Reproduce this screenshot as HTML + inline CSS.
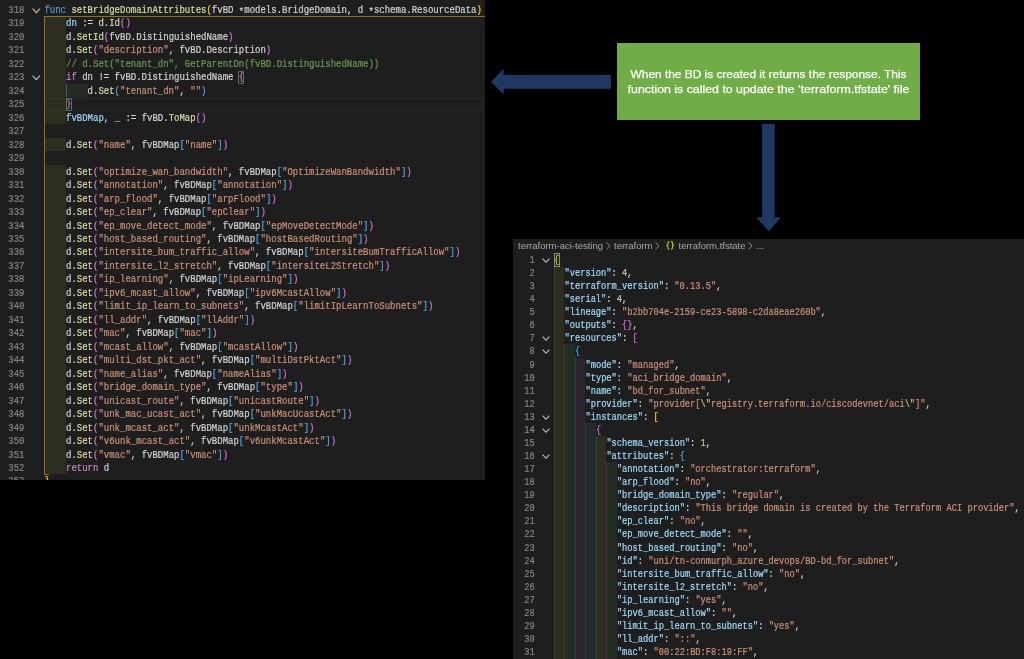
<!DOCTYPE html><html><head><meta charset="utf-8"><style>
*{margin:0;padding:0;box-sizing:border-box}
html,body{width:1024px;height:659px;overflow:hidden;background:#000}
body{position:relative;font-family:"Liberation Mono",monospace}
#lp{will-change:transform;position:absolute;left:0;top:0;width:485px;height:480px;background:#1e1e1e;overflow:hidden}
#rp{will-change:transform;position:absolute;left:513px;top:239px;width:511px;height:420px;background:#1e1e1e;overflow:hidden}
.ln{position:absolute;left:0;text-align:right;color:#858585;white-space:pre}
.cl{position:absolute;white-space:pre}
.ir{position:absolute}
.l{font-size:9px;line-height:13.47px;height:13.47px;transform-origin:0 8.2px;transform:translateY(1.8px) scaleY(1.15)}
.r{font-size:8.73px;line-height:13.07px;height:13.07px;transform-origin:0 8px;transform:translateY(1.6px) scaleY(1.15)}
.t{color:#d4d4d4}.k{color:#569cd6}.c{color:#c586c0}.f{color:#dcdcaa}.v{color:#9cdcfe}
.s{color:#ce9178}.m{color:#6a9955}.n{color:#b5cea8}.e{color:#d7ba7d}
.ast{color:#d4d4d4;position:relative;top:1.6px}.b1{color:#ffd700}.b2{color:#da70d6}.b3{color:#45acea}
.cl,.ln{-webkit-text-stroke:0.18px currentColor}
.bc{position:absolute;left:0;top:0;width:511px;height:14px;font-family:"Liberation Sans",sans-serif;font-size:9.5px;color:#a9a9a9}
.bt,.bti{position:absolute;top:1px;line-height:12px;white-space:pre}
.bti{color:#cbcb41}
#box{position:absolute;left:617px;top:43px;width:303px;height:77px;background:#70ad47;color:#fff;font-family:"Liberation Sans",sans-serif;font-size:11.5px;text-align:center}
#box{will-change:transform}
.bl{position:absolute;left:0;width:303px;white-space:pre;text-align:center;line-height:14px;-webkit-text-stroke:0.25px #fff}
</style></head><body><div id="lp"><div class="ln l" style="top:3.00px;width:24.50px">318</div><div class="cl l" style="left:44.40px;top:3.00px"><span class="k">func</span><span class="t"> </span><span class="f">setBridgeDomainAttributes</span><span class="b1">(</span><span class="t">fvBD </span><span class="ast">*</span><span class="t">models.BridgeDomain, d </span><span class="ast">*</span><span class="t">schema.ResourceData</span><span class="b1">)</span><span class="t"> </span><span class="b1">{</span></div><div class="ln l" style="top:16.47px;width:24.50px">319</div><div class="ir" style="left:44.40px;top:16.47px;width:21.60px;height:13.49px;background:rgba(255,255,64,0.07)"></div><div class="cl l" style="left:66.00px;top:16.47px"><span class="v">dn</span><span class="t"> := d.</span><span class="f">Id</span><span class="b2">()</span></div><div class="ln l" style="top:29.94px;width:24.50px">320</div><div class="ir" style="left:44.40px;top:29.94px;width:21.60px;height:13.49px;background:rgba(255,255,64,0.07)"></div><div class="cl l" style="left:66.00px;top:29.94px"><span class="t">d.</span><span class="f">SetId</span><span class="b2">(</span><span class="t">fvBD.DistinguishedName</span><span class="b2">)</span></div><div class="ln l" style="top:43.41px;width:24.50px">321</div><div class="ir" style="left:44.40px;top:43.41px;width:21.60px;height:13.49px;background:rgba(255,255,64,0.07)"></div><div class="cl l" style="left:66.00px;top:43.41px"><span class="t">d.</span><span class="f">Set</span><span class="b2">(</span><span class="s">&quot;description&quot;</span><span class="t">, fvBD.Description</span><span class="b2">)</span></div><div class="ln l" style="top:56.88px;width:24.50px">322</div><div class="ir" style="left:44.40px;top:56.88px;width:21.60px;height:13.49px;background:rgba(255,255,64,0.07)"></div><div class="cl l" style="left:66.00px;top:56.88px"><span class="m">// d.Set(&quot;tenant_dn&quot;, GetParentDn(fvBD.DistinguishedName))</span></div><div class="ln l" style="top:70.35px;width:24.50px">323</div><div class="ir" style="left:44.40px;top:70.35px;width:21.60px;height:13.49px;background:rgba(255,255,64,0.07)"></div><div class="cl l" style="left:66.00px;top:70.35px"><span class="c">if</span><span class="t"> dn != fvBD.DistinguishedName </span><span class="b2">{</span></div><div class="ln l" style="top:83.82px;width:24.50px">324</div><div class="ir" style="left:44.40px;top:83.82px;width:21.60px;height:13.49px;background:rgba(255,255,64,0.07)"></div><div class="ir" style="left:66.00px;top:83.82px;width:21.60px;height:13.49px;background:rgba(127,255,127,0.07)"></div><div class="cl l" style="left:87.60px;top:83.82px"><span class="t">d.</span><span class="f">Set</span><span class="b3">(</span><span class="s">&quot;tenant_dn&quot;</span><span class="t">, </span><span class="s">&quot;&quot;</span><span class="b3">)</span></div><div class="ln l" style="top:97.29px;width:24.50px">325</div><div class="ir" style="left:44.40px;top:97.29px;width:21.60px;height:13.49px;background:rgba(255,255,64,0.07)"></div><div class="cl l" style="left:66.00px;top:97.29px"><span class="b2">}</span></div><div class="ln l" style="top:110.76px;width:24.50px">326</div><div class="ir" style="left:44.40px;top:110.76px;width:21.60px;height:13.49px;background:rgba(255,255,64,0.07)"></div><div class="cl l" style="left:66.00px;top:110.76px"><span class="v">fvBDMap</span><span class="t">, </span><span class="v">_</span><span class="t"> := fvBD.</span><span class="f">ToMap</span><span class="b2">()</span></div><div class="ln l" style="top:124.23px;width:24.50px">327</div><div class="ln l" style="top:137.70px;width:24.50px">328</div><div class="ir" style="left:44.40px;top:137.70px;width:21.60px;height:13.49px;background:rgba(255,255,64,0.07)"></div><div class="cl l" style="left:66.00px;top:137.70px"><span class="t">d.</span><span class="f">Set</span><span class="b2">(</span><span class="s">&quot;name&quot;</span><span class="t">, fvBDMap</span><span class="b3">[</span><span class="s">&quot;name&quot;</span><span class="b3">]</span><span class="b2">)</span></div><div class="ln l" style="top:151.17px;width:24.50px">329</div><div class="ln l" style="top:164.64px;width:24.50px">330</div><div class="ir" style="left:44.40px;top:164.64px;width:21.60px;height:13.49px;background:rgba(255,255,64,0.07)"></div><div class="cl l" style="left:66.00px;top:164.64px"><span class="t">d.</span><span class="f">Set</span><span class="b2">(</span><span class="s">&quot;optimize_wan_bandwidth&quot;</span><span class="t">, fvBDMap</span><span class="b3">[</span><span class="s">&quot;OptimizeWanBandwidth&quot;</span><span class="b3">]</span><span class="b2">)</span></div><div class="ln l" style="top:178.11px;width:24.50px">331</div><div class="ir" style="left:44.40px;top:178.11px;width:21.60px;height:13.49px;background:rgba(255,255,64,0.07)"></div><div class="cl l" style="left:66.00px;top:178.11px"><span class="t">d.</span><span class="f">Set</span><span class="b2">(</span><span class="s">&quot;annotation&quot;</span><span class="t">, fvBDMap</span><span class="b3">[</span><span class="s">&quot;annotation&quot;</span><span class="b3">]</span><span class="b2">)</span></div><div class="ln l" style="top:191.58px;width:24.50px">332</div><div class="ir" style="left:44.40px;top:191.58px;width:21.60px;height:13.49px;background:rgba(255,255,64,0.07)"></div><div class="cl l" style="left:66.00px;top:191.58px"><span class="t">d.</span><span class="f">Set</span><span class="b2">(</span><span class="s">&quot;arp_flood&quot;</span><span class="t">, fvBDMap</span><span class="b3">[</span><span class="s">&quot;arpFlood&quot;</span><span class="b3">]</span><span class="b2">)</span></div><div class="ln l" style="top:205.05px;width:24.50px">333</div><div class="ir" style="left:44.40px;top:205.05px;width:21.60px;height:13.49px;background:rgba(255,255,64,0.07)"></div><div class="cl l" style="left:66.00px;top:205.05px"><span class="t">d.</span><span class="f">Set</span><span class="b2">(</span><span class="s">&quot;ep_clear&quot;</span><span class="t">, fvBDMap</span><span class="b3">[</span><span class="s">&quot;epClear&quot;</span><span class="b3">]</span><span class="b2">)</span></div><div class="ln l" style="top:218.52px;width:24.50px">334</div><div class="ir" style="left:44.40px;top:218.52px;width:21.60px;height:13.49px;background:rgba(255,255,64,0.07)"></div><div class="cl l" style="left:66.00px;top:218.52px"><span class="t">d.</span><span class="f">Set</span><span class="b2">(</span><span class="s">&quot;ep_move_detect_mode&quot;</span><span class="t">, fvBDMap</span><span class="b3">[</span><span class="s">&quot;epMoveDetectMode&quot;</span><span class="b3">]</span><span class="b2">)</span></div><div class="ln l" style="top:231.99px;width:24.50px">335</div><div class="ir" style="left:44.40px;top:231.99px;width:21.60px;height:13.49px;background:rgba(255,255,64,0.07)"></div><div class="cl l" style="left:66.00px;top:231.99px"><span class="t">d.</span><span class="f">Set</span><span class="b2">(</span><span class="s">&quot;host_based_routing&quot;</span><span class="t">, fvBDMap</span><span class="b3">[</span><span class="s">&quot;hostBasedRouting&quot;</span><span class="b3">]</span><span class="b2">)</span></div><div class="ln l" style="top:245.46px;width:24.50px">336</div><div class="ir" style="left:44.40px;top:245.46px;width:21.60px;height:13.49px;background:rgba(255,255,64,0.07)"></div><div class="cl l" style="left:66.00px;top:245.46px"><span class="t">d.</span><span class="f">Set</span><span class="b2">(</span><span class="s">&quot;intersite_bum_traffic_allow&quot;</span><span class="t">, fvBDMap</span><span class="b3">[</span><span class="s">&quot;intersiteBumTrafficAllow&quot;</span><span class="b3">]</span><span class="b2">)</span></div><div class="ln l" style="top:258.93px;width:24.50px">337</div><div class="ir" style="left:44.40px;top:258.93px;width:21.60px;height:13.49px;background:rgba(255,255,64,0.07)"></div><div class="cl l" style="left:66.00px;top:258.93px"><span class="t">d.</span><span class="f">Set</span><span class="b2">(</span><span class="s">&quot;intersite_l2_stretch&quot;</span><span class="t">, fvBDMap</span><span class="b3">[</span><span class="s">&quot;intersiteL2Stretch&quot;</span><span class="b3">]</span><span class="b2">)</span></div><div class="ln l" style="top:272.40px;width:24.50px">338</div><div class="ir" style="left:44.40px;top:272.40px;width:21.60px;height:13.49px;background:rgba(255,255,64,0.07)"></div><div class="cl l" style="left:66.00px;top:272.40px"><span class="t">d.</span><span class="f">Set</span><span class="b2">(</span><span class="s">&quot;ip_learning&quot;</span><span class="t">, fvBDMap</span><span class="b3">[</span><span class="s">&quot;ipLearning&quot;</span><span class="b3">]</span><span class="b2">)</span></div><div class="ln l" style="top:285.87px;width:24.50px">339</div><div class="ir" style="left:44.40px;top:285.87px;width:21.60px;height:13.49px;background:rgba(255,255,64,0.07)"></div><div class="cl l" style="left:66.00px;top:285.87px"><span class="t">d.</span><span class="f">Set</span><span class="b2">(</span><span class="s">&quot;ipv6_mcast_allow&quot;</span><span class="t">, fvBDMap</span><span class="b3">[</span><span class="s">&quot;ipv6McastAllow&quot;</span><span class="b3">]</span><span class="b2">)</span></div><div class="ln l" style="top:299.34px;width:24.50px">340</div><div class="ir" style="left:44.40px;top:299.34px;width:21.60px;height:13.49px;background:rgba(255,255,64,0.07)"></div><div class="cl l" style="left:66.00px;top:299.34px"><span class="t">d.</span><span class="f">Set</span><span class="b2">(</span><span class="s">&quot;limit_ip_learn_to_subnets&quot;</span><span class="t">, fvBDMap</span><span class="b3">[</span><span class="s">&quot;limitIpLearnToSubnets&quot;</span><span class="b3">]</span><span class="b2">)</span></div><div class="ln l" style="top:312.81px;width:24.50px">341</div><div class="ir" style="left:44.40px;top:312.81px;width:21.60px;height:13.49px;background:rgba(255,255,64,0.07)"></div><div class="cl l" style="left:66.00px;top:312.81px"><span class="t">d.</span><span class="f">Set</span><span class="b2">(</span><span class="s">&quot;ll_addr&quot;</span><span class="t">, fvBDMap</span><span class="b3">[</span><span class="s">&quot;llAddr&quot;</span><span class="b3">]</span><span class="b2">)</span></div><div class="ln l" style="top:326.28px;width:24.50px">342</div><div class="ir" style="left:44.40px;top:326.28px;width:21.60px;height:13.49px;background:rgba(255,255,64,0.07)"></div><div class="cl l" style="left:66.00px;top:326.28px"><span class="t">d.</span><span class="f">Set</span><span class="b2">(</span><span class="s">&quot;mac&quot;</span><span class="t">, fvBDMap</span><span class="b3">[</span><span class="s">&quot;mac&quot;</span><span class="b3">]</span><span class="b2">)</span></div><div class="ln l" style="top:339.75px;width:24.50px">343</div><div class="ir" style="left:44.40px;top:339.75px;width:21.60px;height:13.49px;background:rgba(255,255,64,0.07)"></div><div class="cl l" style="left:66.00px;top:339.75px"><span class="t">d.</span><span class="f">Set</span><span class="b2">(</span><span class="s">&quot;mcast_allow&quot;</span><span class="t">, fvBDMap</span><span class="b3">[</span><span class="s">&quot;mcastAllow&quot;</span><span class="b3">]</span><span class="b2">)</span></div><div class="ln l" style="top:353.22px;width:24.50px">344</div><div class="ir" style="left:44.40px;top:353.22px;width:21.60px;height:13.49px;background:rgba(255,255,64,0.07)"></div><div class="cl l" style="left:66.00px;top:353.22px"><span class="t">d.</span><span class="f">Set</span><span class="b2">(</span><span class="s">&quot;multi_dst_pkt_act&quot;</span><span class="t">, fvBDMap</span><span class="b3">[</span><span class="s">&quot;multiDstPktAct&quot;</span><span class="b3">]</span><span class="b2">)</span></div><div class="ln l" style="top:366.69px;width:24.50px">345</div><div class="ir" style="left:44.40px;top:366.69px;width:21.60px;height:13.49px;background:rgba(255,255,64,0.07)"></div><div class="cl l" style="left:66.00px;top:366.69px"><span class="t">d.</span><span class="f">Set</span><span class="b2">(</span><span class="s">&quot;name_alias&quot;</span><span class="t">, fvBDMap</span><span class="b3">[</span><span class="s">&quot;nameAlias&quot;</span><span class="b3">]</span><span class="b2">)</span></div><div class="ln l" style="top:380.16px;width:24.50px">346</div><div class="ir" style="left:44.40px;top:380.16px;width:21.60px;height:13.49px;background:rgba(255,255,64,0.07)"></div><div class="cl l" style="left:66.00px;top:380.16px"><span class="t">d.</span><span class="f">Set</span><span class="b2">(</span><span class="s">&quot;bridge_domain_type&quot;</span><span class="t">, fvBDMap</span><span class="b3">[</span><span class="s">&quot;type&quot;</span><span class="b3">]</span><span class="b2">)</span></div><div class="ln l" style="top:393.63px;width:24.50px">347</div><div class="ir" style="left:44.40px;top:393.63px;width:21.60px;height:13.49px;background:rgba(255,255,64,0.07)"></div><div class="cl l" style="left:66.00px;top:393.63px"><span class="t">d.</span><span class="f">Set</span><span class="b2">(</span><span class="s">&quot;unicast_route&quot;</span><span class="t">, fvBDMap</span><span class="b3">[</span><span class="s">&quot;unicastRoute&quot;</span><span class="b3">]</span><span class="b2">)</span></div><div class="ln l" style="top:407.10px;width:24.50px">348</div><div class="ir" style="left:44.40px;top:407.10px;width:21.60px;height:13.49px;background:rgba(255,255,64,0.07)"></div><div class="cl l" style="left:66.00px;top:407.10px"><span class="t">d.</span><span class="f">Set</span><span class="b2">(</span><span class="s">&quot;unk_mac_ucast_act&quot;</span><span class="t">, fvBDMap</span><span class="b3">[</span><span class="s">&quot;unkMacUcastAct&quot;</span><span class="b3">]</span><span class="b2">)</span></div><div class="ln l" style="top:420.57px;width:24.50px">349</div><div class="ir" style="left:44.40px;top:420.57px;width:21.60px;height:13.49px;background:rgba(255,255,64,0.07)"></div><div class="cl l" style="left:66.00px;top:420.57px"><span class="t">d.</span><span class="f">Set</span><span class="b2">(</span><span class="s">&quot;unk_mcast_act&quot;</span><span class="t">, fvBDMap</span><span class="b3">[</span><span class="s">&quot;unkMcastAct&quot;</span><span class="b3">]</span><span class="b2">)</span></div><div class="ln l" style="top:434.04px;width:24.50px">350</div><div class="ir" style="left:44.40px;top:434.04px;width:21.60px;height:13.49px;background:rgba(255,255,64,0.07)"></div><div class="cl l" style="left:66.00px;top:434.04px"><span class="t">d.</span><span class="f">Set</span><span class="b2">(</span><span class="s">&quot;v6unk_mcast_act&quot;</span><span class="t">, fvBDMap</span><span class="b3">[</span><span class="s">&quot;v6unkMcastAct&quot;</span><span class="b3">]</span><span class="b2">)</span></div><div class="ln l" style="top:447.51px;width:24.50px">351</div><div class="ir" style="left:44.40px;top:447.51px;width:21.60px;height:13.49px;background:rgba(255,255,64,0.07)"></div><div class="cl l" style="left:66.00px;top:447.51px"><span class="t">d.</span><span class="f">Set</span><span class="b2">(</span><span class="s">&quot;vmac&quot;</span><span class="t">, fvBDMap</span><span class="b3">[</span><span class="s">&quot;vmac&quot;</span><span class="b3">]</span><span class="b2">)</span></div><div class="ln l" style="top:460.98px;width:24.50px">352</div><div class="ir" style="left:44.40px;top:460.98px;width:21.60px;height:13.49px;background:rgba(255,255,64,0.07)"></div><div class="cl l" style="left:66.00px;top:460.98px"><span class="c">return</span><span class="t"> d</span></div><div class="ln l" style="top:474.45px;width:24.50px">353</div><div class="cl l" style="left:44.40px;top:474.45px"><span class="b1">}</span></div><div style="position:absolute;left:45px;top:98.09px;width:440px;height:12.87px;border-top:1.2px solid rgba(255,255,255,0.055);border-bottom:1.2px solid rgba(255,255,255,0.055)"></div><div style="position:absolute;left:65.70px;top:98.09px;width:6.30px;height:13.07px;border:1px solid #6a6a6a;border-radius:1px;background:rgba(0,100,0,0.12)"></div><div style="position:absolute;left:238.00px;top:71.15px;width:6.30px;height:13.07px;border:1px solid #6a6a6a;border-radius:1px;background:rgba(0,100,0,0.12)"></div><div style="position:absolute;left:66px;top:83.82px;width:1px;height:13.47px;background:#555"></div><div style="position:absolute;left:43.9px;top:16px;width:442px;height:1.2px;background:#8a7418"></div><div style="position:absolute;left:43.9px;top:16px;width:1.2px;height:459px;background:#8a7418"></div><div style="position:absolute;left:43.9px;top:474px;width:5.6px;height:1.2px;background:#8a7418"></div><svg style="position:absolute;left:31.5px;top:7.90px" width="9" height="6" viewBox="0 0 9 6"><polyline points="0.6,0.6 4.3,4.6 8.0,0.6" fill="none" stroke="#c5c5c5" stroke-width="1.1"/></svg><svg style="position:absolute;left:31.5px;top:75.25px" width="9" height="6" viewBox="0 0 9 6"><polyline points="0.6,0.6 4.3,4.6 8.0,0.6" fill="none" stroke="#c5c5c5" stroke-width="1.1"/></svg></div><div id="rp"><div class="bc"><span class="bt" style="left:5px">terraform-aci-testing</span><span class="bt" style="left:101px">terraform</span><span class="bt" style="left:165.5px">terraform.tfstate</span><span class="bt" style="left:243px">...</span><svg style="position:absolute;left:93.30px;top:2.9px" width="5" height="8" viewBox="0 0 5 8"><polyline points="0.5,0.4 4.0,3.8 0.5,7.2" fill="none" stroke="#9b9b9b" stroke-width="0.9"/></svg><svg style="position:absolute;left:142.30px;top:2.9px" width="5" height="8" viewBox="0 0 5 8"><polyline points="0.5,0.4 4.0,3.8 0.5,7.2" fill="none" stroke="#9b9b9b" stroke-width="0.9"/></svg><svg style="position:absolute;left:235.20px;top:2.9px" width="5" height="8" viewBox="0 0 5 8"><polyline points="0.5,0.4 4.0,3.8 0.5,7.2" fill="none" stroke="#9b9b9b" stroke-width="0.9"/></svg><svg style="position:absolute;left:152.5px;top:1.7px" width="9" height="9" viewBox="0 0 9 9"><path d="M3.4,0.6 C2.2,0.6 1.9,1.1 1.9,2.0 L1.9,3.3 C1.9,4.0 1.5,4.4 0.5,4.4 C1.5,4.4 1.9,4.8 1.9,5.5 L1.9,6.8 C1.9,7.7 2.2,8.2 3.4,8.2 M5.0,0.6 C6.2,0.6 6.5,1.1 6.5,2.0 L6.5,3.3 C6.5,4.0 6.9,4.4 7.9,4.4 C6.9,4.4 6.5,4.8 6.5,5.5 L6.5,6.8 C6.5,7.7 6.2,8.2 5.0,8.2" fill="none" stroke="#c5c52a" stroke-width="1.1"/></svg></div><div class="ln r" style="top:14.00px;width:21.70px">1</div><div class="cl r" style="left:41.00px;top:14.00px"><span class="b1">{</span></div><div class="ln r" style="top:27.07px;width:21.70px">2</div><div class="ir" style="left:41.00px;top:27.07px;width:10.48px;height:13.09px;background:rgba(255,255,64,0.07);border-left:1px solid rgba(255,255,255,0.09)"></div><div class="cl r" style="left:51.48px;top:27.07px"><span class="v">&quot;version&quot;</span><span class="t">: </span><span class="n">4</span><span class="t">,</span></div><div class="ln r" style="top:40.14px;width:21.70px">3</div><div class="ir" style="left:41.00px;top:40.14px;width:10.48px;height:13.09px;background:rgba(255,255,64,0.07);border-left:1px solid rgba(255,255,255,0.09)"></div><div class="cl r" style="left:51.48px;top:40.14px"><span class="v">&quot;terraform_version&quot;</span><span class="t">: </span><span class="s">&quot;0.13.5&quot;</span><span class="t">,</span></div><div class="ln r" style="top:53.21px;width:21.70px">4</div><div class="ir" style="left:41.00px;top:53.21px;width:10.48px;height:13.09px;background:rgba(255,255,64,0.07);border-left:1px solid rgba(255,255,255,0.09)"></div><div class="cl r" style="left:51.48px;top:53.21px"><span class="v">&quot;serial&quot;</span><span class="t">: </span><span class="n">4</span><span class="t">,</span></div><div class="ln r" style="top:66.28px;width:21.70px">5</div><div class="ir" style="left:41.00px;top:66.28px;width:10.48px;height:13.09px;background:rgba(255,255,64,0.07);border-left:1px solid rgba(255,255,255,0.09)"></div><div class="cl r" style="left:51.48px;top:66.28px"><span class="v">&quot;lineage&quot;</span><span class="t">: </span><span class="s">&quot;b2bb704e-2159-ce23-5898-c2da8eae260b&quot;</span><span class="t">,</span></div><div class="ln r" style="top:79.35px;width:21.70px">6</div><div class="ir" style="left:41.00px;top:79.35px;width:10.48px;height:13.09px;background:rgba(255,255,64,0.07);border-left:1px solid rgba(255,255,255,0.09)"></div><div class="cl r" style="left:51.48px;top:79.35px"><span class="v">&quot;outputs&quot;</span><span class="t">: </span><span class="b2">{}</span><span class="t">,</span></div><div class="ln r" style="top:92.42px;width:21.70px">7</div><div class="ir" style="left:41.00px;top:92.42px;width:10.48px;height:13.09px;background:rgba(255,255,64,0.07);border-left:1px solid rgba(255,255,255,0.09)"></div><div class="cl r" style="left:51.48px;top:92.42px"><span class="v">&quot;resources&quot;</span><span class="t">: </span><span class="b2">[</span></div><div class="ln r" style="top:105.49px;width:21.70px">8</div><div class="ir" style="left:41.00px;top:105.49px;width:10.48px;height:13.09px;background:rgba(255,255,64,0.07);border-left:1px solid rgba(255,255,255,0.09)"></div><div class="ir" style="left:51.48px;top:105.49px;width:10.48px;height:13.09px;background:rgba(127,255,127,0.07);border-left:1px solid rgba(255,255,255,0.09)"></div><div class="cl r" style="left:61.96px;top:105.49px"><span class="b3">{</span></div><div class="ln r" style="top:118.56px;width:21.70px">9</div><div class="ir" style="left:41.00px;top:118.56px;width:10.48px;height:13.09px;background:rgba(255,255,64,0.07);border-left:1px solid rgba(255,255,255,0.09)"></div><div class="ir" style="left:51.48px;top:118.56px;width:10.48px;height:13.09px;background:rgba(127,255,127,0.07);border-left:1px solid rgba(255,255,255,0.09)"></div><div class="ir" style="left:61.96px;top:118.56px;width:10.48px;height:13.09px;background:rgba(255,127,255,0.07);border-left:1px solid rgba(255,255,255,0.09)"></div><div class="cl r" style="left:72.44px;top:118.56px"><span class="v">&quot;mode&quot;</span><span class="t">: </span><span class="s">&quot;managed&quot;</span><span class="t">,</span></div><div class="ln r" style="top:131.63px;width:21.70px">10</div><div class="ir" style="left:41.00px;top:131.63px;width:10.48px;height:13.09px;background:rgba(255,255,64,0.07);border-left:1px solid rgba(255,255,255,0.09)"></div><div class="ir" style="left:51.48px;top:131.63px;width:10.48px;height:13.09px;background:rgba(127,255,127,0.07);border-left:1px solid rgba(255,255,255,0.09)"></div><div class="ir" style="left:61.96px;top:131.63px;width:10.48px;height:13.09px;background:rgba(255,127,255,0.07);border-left:1px solid rgba(255,255,255,0.09)"></div><div class="cl r" style="left:72.44px;top:131.63px"><span class="v">&quot;type&quot;</span><span class="t">: </span><span class="s">&quot;aci_bridge_domain&quot;</span><span class="t">,</span></div><div class="ln r" style="top:144.70px;width:21.70px">11</div><div class="ir" style="left:41.00px;top:144.70px;width:10.48px;height:13.09px;background:rgba(255,255,64,0.07);border-left:1px solid rgba(255,255,255,0.09)"></div><div class="ir" style="left:51.48px;top:144.70px;width:10.48px;height:13.09px;background:rgba(127,255,127,0.07);border-left:1px solid rgba(255,255,255,0.09)"></div><div class="ir" style="left:61.96px;top:144.70px;width:10.48px;height:13.09px;background:rgba(255,127,255,0.07);border-left:1px solid rgba(255,255,255,0.09)"></div><div class="cl r" style="left:72.44px;top:144.70px"><span class="v">&quot;name&quot;</span><span class="t">: </span><span class="s">&quot;bd_for_subnet&quot;</span><span class="t">,</span></div><div class="ln r" style="top:157.77px;width:21.70px">12</div><div class="ir" style="left:41.00px;top:157.77px;width:10.48px;height:13.09px;background:rgba(255,255,64,0.07);border-left:1px solid rgba(255,255,255,0.09)"></div><div class="ir" style="left:51.48px;top:157.77px;width:10.48px;height:13.09px;background:rgba(127,255,127,0.07);border-left:1px solid rgba(255,255,255,0.09)"></div><div class="ir" style="left:61.96px;top:157.77px;width:10.48px;height:13.09px;background:rgba(255,127,255,0.07);border-left:1px solid rgba(255,255,255,0.09)"></div><div class="cl r" style="left:72.44px;top:157.77px"><span class="v">&quot;provider&quot;</span><span class="t">: </span><span class="s">&quot;provider[</span><span class="e">\&quot;</span><span class="s">registry.terraform.io/ciscodevnet/aci</span><span class="e">\&quot;</span><span class="s">]&quot;</span><span class="t">,</span></div><div class="ln r" style="top:170.84px;width:21.70px">13</div><div class="ir" style="left:41.00px;top:170.84px;width:10.48px;height:13.09px;background:rgba(255,255,64,0.07);border-left:1px solid rgba(255,255,255,0.09)"></div><div class="ir" style="left:51.48px;top:170.84px;width:10.48px;height:13.09px;background:rgba(127,255,127,0.07);border-left:1px solid rgba(255,255,255,0.09)"></div><div class="ir" style="left:61.96px;top:170.84px;width:10.48px;height:13.09px;background:rgba(255,127,255,0.07);border-left:1px solid rgba(255,255,255,0.09)"></div><div class="cl r" style="left:72.44px;top:170.84px"><span class="v">&quot;instances&quot;</span><span class="t">: </span><span class="b1">[</span></div><div class="ln r" style="top:183.91px;width:21.70px">14</div><div class="ir" style="left:41.00px;top:183.91px;width:10.48px;height:13.09px;background:rgba(255,255,64,0.07);border-left:1px solid rgba(255,255,255,0.09)"></div><div class="ir" style="left:51.48px;top:183.91px;width:10.48px;height:13.09px;background:rgba(127,255,127,0.07);border-left:1px solid rgba(255,255,255,0.09)"></div><div class="ir" style="left:61.96px;top:183.91px;width:10.48px;height:13.09px;background:rgba(255,127,255,0.07);border-left:1px solid rgba(255,255,255,0.09)"></div><div class="ir" style="left:72.44px;top:183.91px;width:10.48px;height:13.09px;background:rgba(79,236,236,0.07);border-left:1px solid rgba(255,255,255,0.09)"></div><div class="cl r" style="left:82.92px;top:183.91px"><span class="b2">{</span></div><div class="ln r" style="top:196.98px;width:21.70px">15</div><div class="ir" style="left:41.00px;top:196.98px;width:10.48px;height:13.09px;background:rgba(255,255,64,0.07);border-left:1px solid rgba(255,255,255,0.09)"></div><div class="ir" style="left:51.48px;top:196.98px;width:10.48px;height:13.09px;background:rgba(127,255,127,0.07);border-left:1px solid rgba(255,255,255,0.09)"></div><div class="ir" style="left:61.96px;top:196.98px;width:10.48px;height:13.09px;background:rgba(255,127,255,0.07);border-left:1px solid rgba(255,255,255,0.09)"></div><div class="ir" style="left:72.44px;top:196.98px;width:10.48px;height:13.09px;background:rgba(79,236,236,0.07);border-left:1px solid rgba(255,255,255,0.09)"></div><div class="ir" style="left:82.92px;top:196.98px;width:10.48px;height:13.09px;background:rgba(255,255,64,0.07);border-left:1px solid rgba(255,255,255,0.09)"></div><div class="cl r" style="left:93.40px;top:196.98px"><span class="v">&quot;schema_version&quot;</span><span class="t">: </span><span class="n">1</span><span class="t">,</span></div><div class="ln r" style="top:210.05px;width:21.70px">16</div><div class="ir" style="left:41.00px;top:210.05px;width:10.48px;height:13.09px;background:rgba(255,255,64,0.07);border-left:1px solid rgba(255,255,255,0.09)"></div><div class="ir" style="left:51.48px;top:210.05px;width:10.48px;height:13.09px;background:rgba(127,255,127,0.07);border-left:1px solid rgba(255,255,255,0.09)"></div><div class="ir" style="left:61.96px;top:210.05px;width:10.48px;height:13.09px;background:rgba(255,127,255,0.07);border-left:1px solid rgba(255,255,255,0.09)"></div><div class="ir" style="left:72.44px;top:210.05px;width:10.48px;height:13.09px;background:rgba(79,236,236,0.07);border-left:1px solid rgba(255,255,255,0.09)"></div><div class="ir" style="left:82.92px;top:210.05px;width:10.48px;height:13.09px;background:rgba(255,255,64,0.07);border-left:1px solid rgba(255,255,255,0.09)"></div><div class="cl r" style="left:93.40px;top:210.05px"><span class="v">&quot;attributes&quot;</span><span class="t">: </span><span class="b3">{</span></div><div class="ln r" style="top:223.12px;width:21.70px">17</div><div class="ir" style="left:41.00px;top:223.12px;width:10.48px;height:13.09px;background:rgba(255,255,64,0.07);border-left:1px solid rgba(255,255,255,0.09)"></div><div class="ir" style="left:51.48px;top:223.12px;width:10.48px;height:13.09px;background:rgba(127,255,127,0.07);border-left:1px solid rgba(255,255,255,0.09)"></div><div class="ir" style="left:61.96px;top:223.12px;width:10.48px;height:13.09px;background:rgba(255,127,255,0.07);border-left:1px solid rgba(255,255,255,0.09)"></div><div class="ir" style="left:72.44px;top:223.12px;width:10.48px;height:13.09px;background:rgba(79,236,236,0.07);border-left:1px solid rgba(255,255,255,0.09)"></div><div class="ir" style="left:82.92px;top:223.12px;width:10.48px;height:13.09px;background:rgba(255,255,64,0.07);border-left:1px solid rgba(255,255,255,0.09)"></div><div class="ir" style="left:93.40px;top:223.12px;width:10.48px;height:13.09px;background:rgba(127,255,127,0.07);border-left:1px solid rgba(255,255,255,0.09)"></div><div class="cl r" style="left:103.88px;top:223.12px"><span class="v">&quot;annotation&quot;</span><span class="t">: </span><span class="s">&quot;orchestrator:terraform&quot;</span><span class="t">,</span></div><div class="ln r" style="top:236.19px;width:21.70px">18</div><div class="ir" style="left:41.00px;top:236.19px;width:10.48px;height:13.09px;background:rgba(255,255,64,0.07);border-left:1px solid rgba(255,255,255,0.09)"></div><div class="ir" style="left:51.48px;top:236.19px;width:10.48px;height:13.09px;background:rgba(127,255,127,0.07);border-left:1px solid rgba(255,255,255,0.09)"></div><div class="ir" style="left:61.96px;top:236.19px;width:10.48px;height:13.09px;background:rgba(255,127,255,0.07);border-left:1px solid rgba(255,255,255,0.09)"></div><div class="ir" style="left:72.44px;top:236.19px;width:10.48px;height:13.09px;background:rgba(79,236,236,0.07);border-left:1px solid rgba(255,255,255,0.09)"></div><div class="ir" style="left:82.92px;top:236.19px;width:10.48px;height:13.09px;background:rgba(255,255,64,0.07);border-left:1px solid rgba(255,255,255,0.09)"></div><div class="ir" style="left:93.40px;top:236.19px;width:10.48px;height:13.09px;background:rgba(127,255,127,0.07);border-left:1px solid rgba(255,255,255,0.09)"></div><div class="cl r" style="left:103.88px;top:236.19px"><span class="v">&quot;arp_flood&quot;</span><span class="t">: </span><span class="s">&quot;no&quot;</span><span class="t">,</span></div><div class="ln r" style="top:249.26px;width:21.70px">19</div><div class="ir" style="left:41.00px;top:249.26px;width:10.48px;height:13.09px;background:rgba(255,255,64,0.07);border-left:1px solid rgba(255,255,255,0.09)"></div><div class="ir" style="left:51.48px;top:249.26px;width:10.48px;height:13.09px;background:rgba(127,255,127,0.07);border-left:1px solid rgba(255,255,255,0.09)"></div><div class="ir" style="left:61.96px;top:249.26px;width:10.48px;height:13.09px;background:rgba(255,127,255,0.07);border-left:1px solid rgba(255,255,255,0.09)"></div><div class="ir" style="left:72.44px;top:249.26px;width:10.48px;height:13.09px;background:rgba(79,236,236,0.07);border-left:1px solid rgba(255,255,255,0.09)"></div><div class="ir" style="left:82.92px;top:249.26px;width:10.48px;height:13.09px;background:rgba(255,255,64,0.07);border-left:1px solid rgba(255,255,255,0.09)"></div><div class="ir" style="left:93.40px;top:249.26px;width:10.48px;height:13.09px;background:rgba(127,255,127,0.07);border-left:1px solid rgba(255,255,255,0.09)"></div><div class="cl r" style="left:103.88px;top:249.26px"><span class="v">&quot;bridge_domain_type&quot;</span><span class="t">: </span><span class="s">&quot;regular&quot;</span><span class="t">,</span></div><div class="ln r" style="top:262.33px;width:21.70px">20</div><div class="ir" style="left:41.00px;top:262.33px;width:10.48px;height:13.09px;background:rgba(255,255,64,0.07);border-left:1px solid rgba(255,255,255,0.09)"></div><div class="ir" style="left:51.48px;top:262.33px;width:10.48px;height:13.09px;background:rgba(127,255,127,0.07);border-left:1px solid rgba(255,255,255,0.09)"></div><div class="ir" style="left:61.96px;top:262.33px;width:10.48px;height:13.09px;background:rgba(255,127,255,0.07);border-left:1px solid rgba(255,255,255,0.09)"></div><div class="ir" style="left:72.44px;top:262.33px;width:10.48px;height:13.09px;background:rgba(79,236,236,0.07);border-left:1px solid rgba(255,255,255,0.09)"></div><div class="ir" style="left:82.92px;top:262.33px;width:10.48px;height:13.09px;background:rgba(255,255,64,0.07);border-left:1px solid rgba(255,255,255,0.09)"></div><div class="ir" style="left:93.40px;top:262.33px;width:10.48px;height:13.09px;background:rgba(127,255,127,0.07);border-left:1px solid rgba(255,255,255,0.09)"></div><div class="cl r" style="left:103.88px;top:262.33px"><span class="v">&quot;description&quot;</span><span class="t">: </span><span class="s">&quot;This bridge domain is created by the Terraform ACI provider&quot;</span><span class="t">,</span></div><div class="ln r" style="top:275.40px;width:21.70px">21</div><div class="ir" style="left:41.00px;top:275.40px;width:10.48px;height:13.09px;background:rgba(255,255,64,0.07);border-left:1px solid rgba(255,255,255,0.09)"></div><div class="ir" style="left:51.48px;top:275.40px;width:10.48px;height:13.09px;background:rgba(127,255,127,0.07);border-left:1px solid rgba(255,255,255,0.09)"></div><div class="ir" style="left:61.96px;top:275.40px;width:10.48px;height:13.09px;background:rgba(255,127,255,0.07);border-left:1px solid rgba(255,255,255,0.09)"></div><div class="ir" style="left:72.44px;top:275.40px;width:10.48px;height:13.09px;background:rgba(79,236,236,0.07);border-left:1px solid rgba(255,255,255,0.09)"></div><div class="ir" style="left:82.92px;top:275.40px;width:10.48px;height:13.09px;background:rgba(255,255,64,0.07);border-left:1px solid rgba(255,255,255,0.09)"></div><div class="ir" style="left:93.40px;top:275.40px;width:10.48px;height:13.09px;background:rgba(127,255,127,0.07);border-left:1px solid rgba(255,255,255,0.09)"></div><div class="cl r" style="left:103.88px;top:275.40px"><span class="v">&quot;ep_clear&quot;</span><span class="t">: </span><span class="s">&quot;no&quot;</span><span class="t">,</span></div><div class="ln r" style="top:288.47px;width:21.70px">22</div><div class="ir" style="left:41.00px;top:288.47px;width:10.48px;height:13.09px;background:rgba(255,255,64,0.07);border-left:1px solid rgba(255,255,255,0.09)"></div><div class="ir" style="left:51.48px;top:288.47px;width:10.48px;height:13.09px;background:rgba(127,255,127,0.07);border-left:1px solid rgba(255,255,255,0.09)"></div><div class="ir" style="left:61.96px;top:288.47px;width:10.48px;height:13.09px;background:rgba(255,127,255,0.07);border-left:1px solid rgba(255,255,255,0.09)"></div><div class="ir" style="left:72.44px;top:288.47px;width:10.48px;height:13.09px;background:rgba(79,236,236,0.07);border-left:1px solid rgba(255,255,255,0.09)"></div><div class="ir" style="left:82.92px;top:288.47px;width:10.48px;height:13.09px;background:rgba(255,255,64,0.07);border-left:1px solid rgba(255,255,255,0.09)"></div><div class="ir" style="left:93.40px;top:288.47px;width:10.48px;height:13.09px;background:rgba(127,255,127,0.07);border-left:1px solid rgba(255,255,255,0.09)"></div><div class="cl r" style="left:103.88px;top:288.47px"><span class="v">&quot;ep_move_detect_mode&quot;</span><span class="t">: </span><span class="s">&quot;&quot;</span><span class="t">,</span></div><div class="ln r" style="top:301.54px;width:21.70px">23</div><div class="ir" style="left:41.00px;top:301.54px;width:10.48px;height:13.09px;background:rgba(255,255,64,0.07);border-left:1px solid rgba(255,255,255,0.09)"></div><div class="ir" style="left:51.48px;top:301.54px;width:10.48px;height:13.09px;background:rgba(127,255,127,0.07);border-left:1px solid rgba(255,255,255,0.09)"></div><div class="ir" style="left:61.96px;top:301.54px;width:10.48px;height:13.09px;background:rgba(255,127,255,0.07);border-left:1px solid rgba(255,255,255,0.09)"></div><div class="ir" style="left:72.44px;top:301.54px;width:10.48px;height:13.09px;background:rgba(79,236,236,0.07);border-left:1px solid rgba(255,255,255,0.09)"></div><div class="ir" style="left:82.92px;top:301.54px;width:10.48px;height:13.09px;background:rgba(255,255,64,0.07);border-left:1px solid rgba(255,255,255,0.09)"></div><div class="ir" style="left:93.40px;top:301.54px;width:10.48px;height:13.09px;background:rgba(127,255,127,0.07);border-left:1px solid rgba(255,255,255,0.09)"></div><div class="cl r" style="left:103.88px;top:301.54px"><span class="v">&quot;host_based_routing&quot;</span><span class="t">: </span><span class="s">&quot;no&quot;</span><span class="t">,</span></div><div class="ln r" style="top:314.61px;width:21.70px">24</div><div class="ir" style="left:41.00px;top:314.61px;width:10.48px;height:13.09px;background:rgba(255,255,64,0.07);border-left:1px solid rgba(255,255,255,0.09)"></div><div class="ir" style="left:51.48px;top:314.61px;width:10.48px;height:13.09px;background:rgba(127,255,127,0.07);border-left:1px solid rgba(255,255,255,0.09)"></div><div class="ir" style="left:61.96px;top:314.61px;width:10.48px;height:13.09px;background:rgba(255,127,255,0.07);border-left:1px solid rgba(255,255,255,0.09)"></div><div class="ir" style="left:72.44px;top:314.61px;width:10.48px;height:13.09px;background:rgba(79,236,236,0.07);border-left:1px solid rgba(255,255,255,0.09)"></div><div class="ir" style="left:82.92px;top:314.61px;width:10.48px;height:13.09px;background:rgba(255,255,64,0.07);border-left:1px solid rgba(255,255,255,0.09)"></div><div class="ir" style="left:93.40px;top:314.61px;width:10.48px;height:13.09px;background:rgba(127,255,127,0.07);border-left:1px solid rgba(255,255,255,0.09)"></div><div class="cl r" style="left:103.88px;top:314.61px"><span class="v">&quot;id&quot;</span><span class="t">: </span><span class="s">&quot;uni/tn-conmurph_azure_devops/BD-bd_for_subnet&quot;</span><span class="t">,</span></div><div class="ln r" style="top:327.68px;width:21.70px">25</div><div class="ir" style="left:41.00px;top:327.68px;width:10.48px;height:13.09px;background:rgba(255,255,64,0.07);border-left:1px solid rgba(255,255,255,0.09)"></div><div class="ir" style="left:51.48px;top:327.68px;width:10.48px;height:13.09px;background:rgba(127,255,127,0.07);border-left:1px solid rgba(255,255,255,0.09)"></div><div class="ir" style="left:61.96px;top:327.68px;width:10.48px;height:13.09px;background:rgba(255,127,255,0.07);border-left:1px solid rgba(255,255,255,0.09)"></div><div class="ir" style="left:72.44px;top:327.68px;width:10.48px;height:13.09px;background:rgba(79,236,236,0.07);border-left:1px solid rgba(255,255,255,0.09)"></div><div class="ir" style="left:82.92px;top:327.68px;width:10.48px;height:13.09px;background:rgba(255,255,64,0.07);border-left:1px solid rgba(255,255,255,0.09)"></div><div class="ir" style="left:93.40px;top:327.68px;width:10.48px;height:13.09px;background:rgba(127,255,127,0.07);border-left:1px solid rgba(255,255,255,0.09)"></div><div class="cl r" style="left:103.88px;top:327.68px"><span class="v">&quot;intersite_bum_traffic_allow&quot;</span><span class="t">: </span><span class="s">&quot;no&quot;</span><span class="t">,</span></div><div class="ln r" style="top:340.75px;width:21.70px">26</div><div class="ir" style="left:41.00px;top:340.75px;width:10.48px;height:13.09px;background:rgba(255,255,64,0.07);border-left:1px solid rgba(255,255,255,0.09)"></div><div class="ir" style="left:51.48px;top:340.75px;width:10.48px;height:13.09px;background:rgba(127,255,127,0.07);border-left:1px solid rgba(255,255,255,0.09)"></div><div class="ir" style="left:61.96px;top:340.75px;width:10.48px;height:13.09px;background:rgba(255,127,255,0.07);border-left:1px solid rgba(255,255,255,0.09)"></div><div class="ir" style="left:72.44px;top:340.75px;width:10.48px;height:13.09px;background:rgba(79,236,236,0.07);border-left:1px solid rgba(255,255,255,0.09)"></div><div class="ir" style="left:82.92px;top:340.75px;width:10.48px;height:13.09px;background:rgba(255,255,64,0.07);border-left:1px solid rgba(255,255,255,0.09)"></div><div class="ir" style="left:93.40px;top:340.75px;width:10.48px;height:13.09px;background:rgba(127,255,127,0.07);border-left:1px solid rgba(255,255,255,0.09)"></div><div class="cl r" style="left:103.88px;top:340.75px"><span class="v">&quot;intersite_l2_stretch&quot;</span><span class="t">: </span><span class="s">&quot;no&quot;</span><span class="t">,</span></div><div class="ln r" style="top:353.82px;width:21.70px">27</div><div class="ir" style="left:41.00px;top:353.82px;width:10.48px;height:13.09px;background:rgba(255,255,64,0.07);border-left:1px solid rgba(255,255,255,0.09)"></div><div class="ir" style="left:51.48px;top:353.82px;width:10.48px;height:13.09px;background:rgba(127,255,127,0.07);border-left:1px solid rgba(255,255,255,0.09)"></div><div class="ir" style="left:61.96px;top:353.82px;width:10.48px;height:13.09px;background:rgba(255,127,255,0.07);border-left:1px solid rgba(255,255,255,0.09)"></div><div class="ir" style="left:72.44px;top:353.82px;width:10.48px;height:13.09px;background:rgba(79,236,236,0.07);border-left:1px solid rgba(255,255,255,0.09)"></div><div class="ir" style="left:82.92px;top:353.82px;width:10.48px;height:13.09px;background:rgba(255,255,64,0.07);border-left:1px solid rgba(255,255,255,0.09)"></div><div class="ir" style="left:93.40px;top:353.82px;width:10.48px;height:13.09px;background:rgba(127,255,127,0.07);border-left:1px solid rgba(255,255,255,0.09)"></div><div class="cl r" style="left:103.88px;top:353.82px"><span class="v">&quot;ip_learning&quot;</span><span class="t">: </span><span class="s">&quot;yes&quot;</span><span class="t">,</span></div><div class="ln r" style="top:366.89px;width:21.70px">28</div><div class="ir" style="left:41.00px;top:366.89px;width:10.48px;height:13.09px;background:rgba(255,255,64,0.07);border-left:1px solid rgba(255,255,255,0.09)"></div><div class="ir" style="left:51.48px;top:366.89px;width:10.48px;height:13.09px;background:rgba(127,255,127,0.07);border-left:1px solid rgba(255,255,255,0.09)"></div><div class="ir" style="left:61.96px;top:366.89px;width:10.48px;height:13.09px;background:rgba(255,127,255,0.07);border-left:1px solid rgba(255,255,255,0.09)"></div><div class="ir" style="left:72.44px;top:366.89px;width:10.48px;height:13.09px;background:rgba(79,236,236,0.07);border-left:1px solid rgba(255,255,255,0.09)"></div><div class="ir" style="left:82.92px;top:366.89px;width:10.48px;height:13.09px;background:rgba(255,255,64,0.07);border-left:1px solid rgba(255,255,255,0.09)"></div><div class="ir" style="left:93.40px;top:366.89px;width:10.48px;height:13.09px;background:rgba(127,255,127,0.07);border-left:1px solid rgba(255,255,255,0.09)"></div><div class="cl r" style="left:103.88px;top:366.89px"><span class="v">&quot;ipv6_mcast_allow&quot;</span><span class="t">: </span><span class="s">&quot;&quot;</span><span class="t">,</span></div><div class="ln r" style="top:379.96px;width:21.70px">29</div><div class="ir" style="left:41.00px;top:379.96px;width:10.48px;height:13.09px;background:rgba(255,255,64,0.07);border-left:1px solid rgba(255,255,255,0.09)"></div><div class="ir" style="left:51.48px;top:379.96px;width:10.48px;height:13.09px;background:rgba(127,255,127,0.07);border-left:1px solid rgba(255,255,255,0.09)"></div><div class="ir" style="left:61.96px;top:379.96px;width:10.48px;height:13.09px;background:rgba(255,127,255,0.07);border-left:1px solid rgba(255,255,255,0.09)"></div><div class="ir" style="left:72.44px;top:379.96px;width:10.48px;height:13.09px;background:rgba(79,236,236,0.07);border-left:1px solid rgba(255,255,255,0.09)"></div><div class="ir" style="left:82.92px;top:379.96px;width:10.48px;height:13.09px;background:rgba(255,255,64,0.07);border-left:1px solid rgba(255,255,255,0.09)"></div><div class="ir" style="left:93.40px;top:379.96px;width:10.48px;height:13.09px;background:rgba(127,255,127,0.07);border-left:1px solid rgba(255,255,255,0.09)"></div><div class="cl r" style="left:103.88px;top:379.96px"><span class="v">&quot;limit_ip_learn_to_subnets&quot;</span><span class="t">: </span><span class="s">&quot;yes&quot;</span><span class="t">,</span></div><div class="ln r" style="top:393.03px;width:21.70px">30</div><div class="ir" style="left:41.00px;top:393.03px;width:10.48px;height:13.09px;background:rgba(255,255,64,0.07);border-left:1px solid rgba(255,255,255,0.09)"></div><div class="ir" style="left:51.48px;top:393.03px;width:10.48px;height:13.09px;background:rgba(127,255,127,0.07);border-left:1px solid rgba(255,255,255,0.09)"></div><div class="ir" style="left:61.96px;top:393.03px;width:10.48px;height:13.09px;background:rgba(255,127,255,0.07);border-left:1px solid rgba(255,255,255,0.09)"></div><div class="ir" style="left:72.44px;top:393.03px;width:10.48px;height:13.09px;background:rgba(79,236,236,0.07);border-left:1px solid rgba(255,255,255,0.09)"></div><div class="ir" style="left:82.92px;top:393.03px;width:10.48px;height:13.09px;background:rgba(255,255,64,0.07);border-left:1px solid rgba(255,255,255,0.09)"></div><div class="ir" style="left:93.40px;top:393.03px;width:10.48px;height:13.09px;background:rgba(127,255,127,0.07);border-left:1px solid rgba(255,255,255,0.09)"></div><div class="cl r" style="left:103.88px;top:393.03px"><span class="v">&quot;ll_addr&quot;</span><span class="t">: </span><span class="s">&quot;::&quot;</span><span class="t">,</span></div><div class="ln r" style="top:406.10px;width:21.70px">31</div><div class="ir" style="left:41.00px;top:406.10px;width:10.48px;height:16.07px;background:rgba(255,255,64,0.07);border-left:1px solid rgba(255,255,255,0.09)"></div><div class="ir" style="left:51.48px;top:406.10px;width:10.48px;height:16.07px;background:rgba(127,255,127,0.07);border-left:1px solid rgba(255,255,255,0.09)"></div><div class="ir" style="left:61.96px;top:406.10px;width:10.48px;height:16.07px;background:rgba(255,127,255,0.07);border-left:1px solid rgba(255,255,255,0.09)"></div><div class="ir" style="left:72.44px;top:406.10px;width:10.48px;height:16.07px;background:rgba(79,236,236,0.07);border-left:1px solid rgba(255,255,255,0.09)"></div><div class="ir" style="left:82.92px;top:406.10px;width:10.48px;height:16.07px;background:rgba(255,255,64,0.07);border-left:1px solid rgba(255,255,255,0.09)"></div><div class="ir" style="left:93.40px;top:406.10px;width:10.48px;height:16.07px;background:rgba(127,255,127,0.07);border-left:1px solid rgba(255,255,255,0.09)"></div><div class="cl r" style="left:103.88px;top:406.10px"><span class="v">&quot;mac&quot;</span><span class="t">: </span><span class="s">&quot;00:22:BD:F8:19:FF&quot;</span><span class="t">,</span></div><div style="position:absolute;left:40.80px;top:14.20px;width:5.84px;height:13.47px;border:1px solid #8a8a8a;background:rgba(0,100,0,0.1)"></div><svg style="position:absolute;left:28.7px;top:18.90px" width="9" height="6" viewBox="0 0 9 6"><polyline points="0.6,0.6 4.0,4.3 7.4,0.6" fill="none" stroke="#c5c5c5" stroke-width="1.1"/></svg><svg style="position:absolute;left:28.7px;top:97.32px" width="9" height="6" viewBox="0 0 9 6"><polyline points="0.6,0.6 4.0,4.3 7.4,0.6" fill="none" stroke="#c5c5c5" stroke-width="1.1"/></svg><svg style="position:absolute;left:28.7px;top:110.39px" width="9" height="6" viewBox="0 0 9 6"><polyline points="0.6,0.6 4.0,4.3 7.4,0.6" fill="none" stroke="#c5c5c5" stroke-width="1.1"/></svg><svg style="position:absolute;left:28.7px;top:175.74px" width="9" height="6" viewBox="0 0 9 6"><polyline points="0.6,0.6 4.0,4.3 7.4,0.6" fill="none" stroke="#c5c5c5" stroke-width="1.1"/></svg><svg style="position:absolute;left:28.7px;top:188.81px" width="9" height="6" viewBox="0 0 9 6"><polyline points="0.6,0.6 4.0,4.3 7.4,0.6" fill="none" stroke="#c5c5c5" stroke-width="1.1"/></svg><svg style="position:absolute;left:28.7px;top:214.95px" width="9" height="6" viewBox="0 0 9 6"><polyline points="0.6,0.6 4.0,4.3 7.4,0.6" fill="none" stroke="#c5c5c5" stroke-width="1.1"/></svg></div>
<div id="box"><span id="bx1" class="bl" style="top:23.50px;transform:scaleX(1.0330)">When the BD is created it returns the response. This</span><span id="bx2" class="bl" style="top:39.00px;transform:scaleX(1.0740)">function is called to update the ‘terraform.tfstate’ file</span></div>
<svg style="position:absolute;left:0;top:0" width="1024" height="659">
<polygon points="491,81.8 503.6,69 503.6,75 611,75 611,88.7 503.6,88.7 503.6,94.6" fill="#203864"/>
<polygon points="762.1,124 774.8,124 774.8,217.3 781,217.3 768.8,231.2 756,217.3 762.1,217.3" fill="#203864"/>
</svg>
</body></html>
